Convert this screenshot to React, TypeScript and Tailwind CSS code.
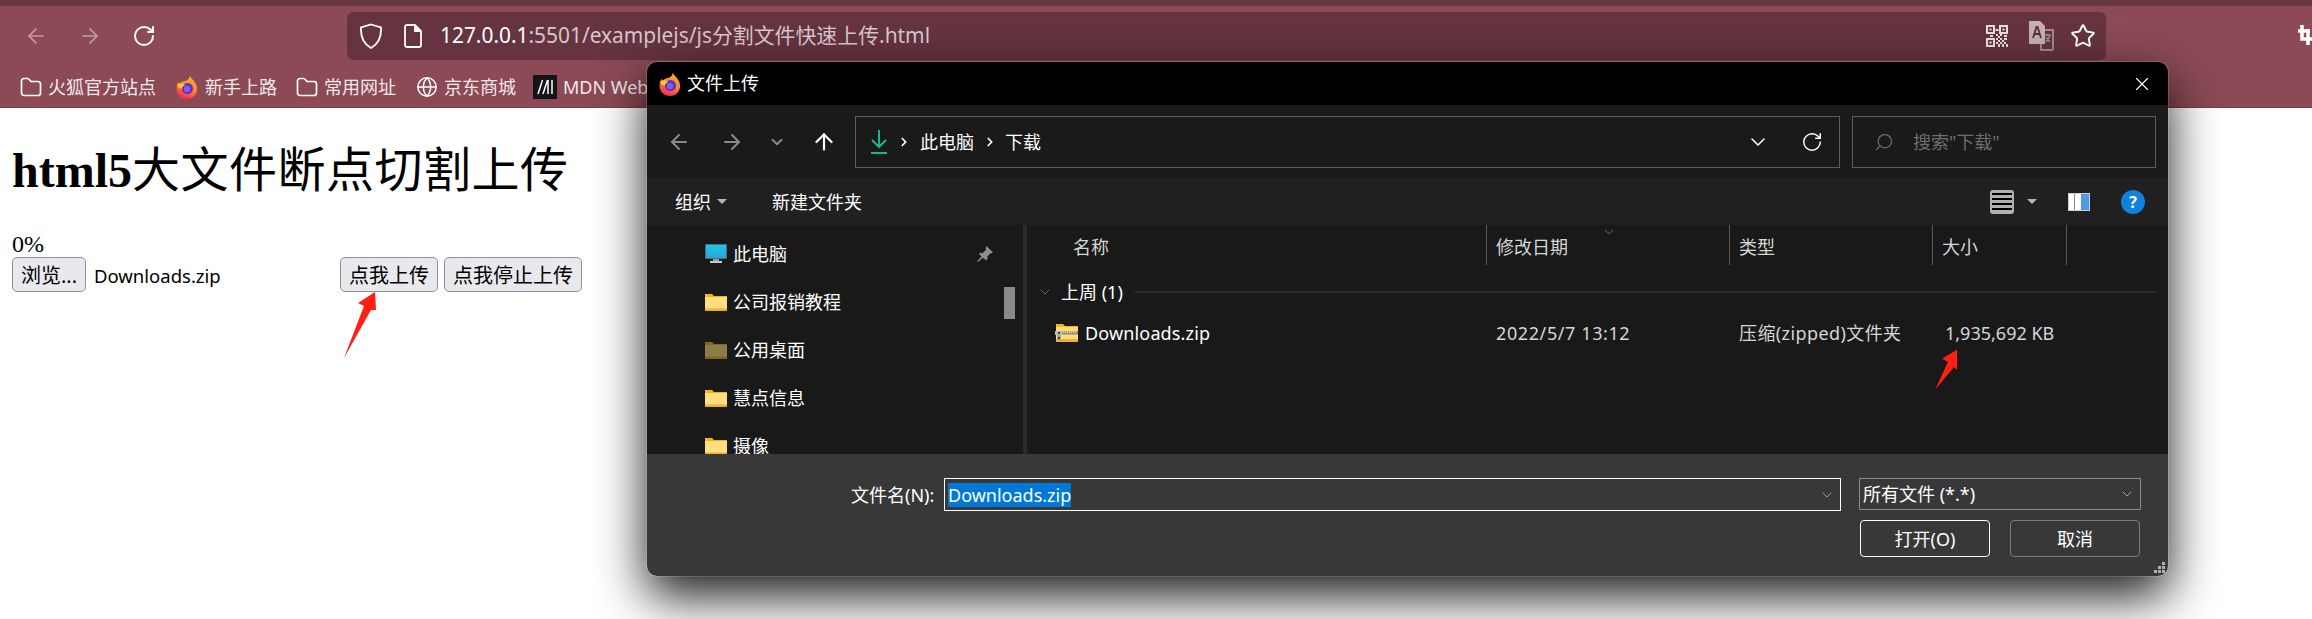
import React from 'react';
import { ArrowLeft, ArrowRight, RotateCw, Star, Globe, ChevronDown, ChevronRight, ArrowUp, Search, X } from 'lucide-react';

const Fox = ({ size = 24 }: { size?: number }) => (
  <svg width={size} height={size} viewBox="0 0 24 24" className="shrink-0">
    <defs>
      <linearGradient id="foxBody" x1="0.7" y1="0" x2="0.3" y2="1">
        <stop offset="0" stopColor="#ffb52e" />
        <stop offset="0.55" stopColor="#ff7a2b" />
        <stop offset="1" stopColor="#f5245f" />
      </linearGradient>
    </defs>
    <path d="M15 .5c.6 3 3.2 4 5 7 2 3.2 2.4 6 2 8-1 5-5 8.500-10 8.500C6 24 1.500 19.500 1.500 13.500c0-2.500.8-5 2.200-6.800l1 2.300C6 7 8 6.200 10 6c2-.3 4.500-2 5-5.500z" fill="url(#foxBody)" />
    <circle cx="12.500" cy="13.500" r="5.500" fill="#5d2fc4" />
    <circle cx="12" cy="14" r="3.200" fill="#8a5ce6" />
    <path d="M2 10c2-2 6-2.500 8 0-1.500 1-3 1.500-3 3.500-2 .5-4-1-5-3.500z" fill="#ffca3d" />
  </svg>
);

const BookmarkFolder = () => (
  <svg width="22" height="22" viewBox="0 0 22 22" fill="none" stroke="#fff" strokeWidth="1.700" className="shrink-0">
    <path d="M1.500 5a2.500 2.500 0 0 1 2.500-2.500h3.500c1 0 1.500.5 2 1.200L11 5.500h7a2.500 2.500 0 0 1 2.500 2.500v9a2.500 2.500 0 0 1-2.500 2.500H4A2.500 2.500 0 0 1 1.500 17z" />
  </svg>
);

const YellowFolder = ({ dim = false }: { dim?: boolean }) => (
  <svg width="22" height="18" viewBox="0 0 22 18" className={`shrink-0 ${dim ? 'opacity-50' : ''}`}>
    <path d="M0 1h7l2 2h13v3H0z" fill="#f5b31f" />
    <path d="M0 4h22v12H0z" fill="#ffdf80" />
    <path d="M0 15.500h22V18H0z" fill="#eeb02e" />
  </svg>
);

const ZipFolder = () => (
  <svg width="23" height="18" viewBox="0 0 23 18" className="shrink-0">
    <path d="M1 0h7l2 2h13v3H1z" fill="#f5b31f" />
    <path d="M1 3h22v13H1z" fill="#ffdc78" />
    <path d="M1 15h22v3H1z" fill="#eeb02e" />
    <path d="M7 7.500h16v3H7z" fill="#8f8a7a" />
    <path d="M8 8.500h14" stroke="#e6e3d6" strokeDasharray="1 1" />
    <path d="M0 7h7v4H0z" fill="#bcbcbc" />
    <path d="M2 11h4v6H2z" fill="#a8a8a8" />
    <path d="M3 8h2v2H3zM3 13h2v2H3z" fill="#3a3a3a" />
  </svg>
);

const Monitor = () => (
  <svg width="22" height="20" viewBox="0 0 22 20" className="shrink-0">
    <defs>
      <linearGradient id="screen" x1="0" y1="0" x2="0" y2="1">
        <stop offset="0" stopColor="#1fc4e8" />
        <stop offset="1" stopColor="#2fa4d6" />
      </linearGradient>
    </defs>
    <rect x="0" y="0" width="22" height="15" rx="1" fill="#3e6f88" />
    <rect x="1" y="1" width="20" height="13" fill="url(#screen)" />
    <path d="M8 15h6v2H8z" fill="#9a9a9a" />
    <path d="M5 17h12v2H5z" fill="#c9c9c9" />
  </svg>
);

const Mdn = () => (
  <svg width="24" height="24" viewBox="0 0 24 24" className="shrink-0">
    <rect width="24" height="24" fill="#15141a" />
    <path d="M5 19 9.500 5M10 19 14.500 5M15 19V5M19 19V5" stroke="#fff" strokeWidth="1.500" fill="none" />
  </svg>
);

const Shield = () => (
  <svg width="24" height="26" viewBox="0 0 24 26" fill="none" stroke="#fff" strokeWidth="1.800" className="shrink-0">
    <path d="M12 1.500 22 4.500c.5 9-1.500 16-10 20.500C3.500 20.500 1.500 13.500 2 4.500z" />
  </svg>
);

const PageIcon = () => (
  <svg width="18" height="24" viewBox="0 0 18 24" fill="none" stroke="#fff" strokeWidth="1.800" className="shrink-0">
    <path d="M3 1h8l6 6v14a2 2 0 0 1-2 2H3a2 2 0 0 1-2-2V3a2 2 0 0 1 2-2z" />
    <path d="M11 1v6h6" fill="#fff" />
  </svg>
);

const QrIcon = () => (
  <svg width="22" height="22" viewBox="0 0 22 22" className="shrink-0" fill="#e8dfe1">
    <path fillRule="evenodd" d="M0 0h9v9H0zM2 2v5h5V2zM13 0h9v9h-9zM15 2v5h5V2zM0 13h9v9H0zM2 15v5h5v-5z" />
    <path d="M3.500 3.500h2v2h-2zM16.500 3.500h2v2h-2zM3.500 16.500h2v2h-2zM9.500 4h3v2h-3zM10 9h2v2h-2zM12 11h2v2h-2zM14 9h2v2h-2zM18 10h3v2h-3zM10 13h2v2h-2zM14 13h2v2h-2zM12 15h2v2h-2zM16 15h2v2h-2zM18 13h3v2h-3zM14 17h2v2h-2zM10 17h2v2h-2zM18 17h2v2h-2zM12 19h2v3h-2zM16 19h2v3h-2zM20 19h2v3h-2zM4 10h3v2H4z" />
  </svg>
);

const TranslateIcon = () => (
  <svg width="26" height="30" viewBox="0 0 26 30" className="shrink-0">
    <path d="M13 9h12v19a1 1 0 0 1-1 1H13z" fill="none" stroke="#b9a3a8" strokeWidth="1.500" />
    <path d="M17 14h6M20 13v2M18 21l4-6M18 16l4 5" stroke="#b9a3a8" strokeWidth="1.200" fill="none" />
    <path d="M1 0h11l5 5v18H5l2 4-2-4H1z" fill="#c4b0b5" />
    <path d="M5 17 8.500 6h1L13 17M6.500 13h5" stroke="#5c2f3a" strokeWidth="1.800" fill="none" />
  </svg>
);

const CropIcon = () => (
  <svg width="14" height="24" viewBox="0 0 14 24" className="shrink-0" fill="none" stroke="#fff" strokeWidth="3.500">
    <path d="M0 7h12M4 1v14h10M10 5v16" />
  </svg>
);

const Bookmark = ({ icon, label, className = '' }: { icon: React.ReactNode; label: string; className?: string }) => (
  <div className={`flex items-center shrink-0 ${className}`}>
    {icon}
    <span className="ml-[6px] text-[18px] leading-none whitespace-nowrap text-[#f3e9eb]">{label}</span>
  </div>
);

const BrowserChrome = () => (
  <div className="h-[108px] shrink-0 bg-[#8b4a55] border-b border-[#7a3f4a]">
    <div className="h-[6px] bg-[#6a3843]" />
    <div className="h-[60px] flex items-center">
      <div className="w-[347px] flex items-center pl-[24px]">
        <ArrowLeft size={24} strokeWidth={1.700} className="text-[#c49da5]" />
        <ArrowRight size={24} strokeWidth={1.700} className="ml-[30px] text-[#c49da5]" />
        <RotateCw size={24} strokeWidth={2} className="ml-[30px] text-white" />
      </div>
      <div className="h-[48px] w-[1759px] rounded-[6px] bg-[#653440] flex items-center pl-[12px] pr-[10px]">
        <Shield />
        <div className="ml-[21px]"><PageIcon /></div>
        <span className="ml-[18px] text-[20.900px] whitespace-nowrap text-[#d9c6ca]">
          <span className="text-white">127.0.0.1</span>:5501/examplejs/js分割文件快速上传.html
        </span>
        <div className="ml-auto flex items-center">
          <QrIcon />
          <div className="ml-[20px]"><TranslateIcon /></div>
          <Star size={26} strokeWidth={1.800} className="ml-[16px] text-white" />
        </div>
      </div>
      <div className="ml-auto"><CropIcon /></div>
    </div>
    <div className="h-[41px] flex items-center pl-[20px] overflow-hidden">
      <Bookmark icon={<BookmarkFolder />} label="火狐官方站点" />
      <Bookmark className="ml-[19px]" icon={<Fox />} label="新手上路" />
      <Bookmark className="ml-[19px]" icon={<BookmarkFolder />} label="常用网址" />
      <Bookmark className="ml-[20px]" icon={<Globe size={22} strokeWidth={1.600} className="text-white" />} label="京东商城" />
      <Bookmark className="ml-[17px]" icon={<Mdn />} label="MDN Web Docs" />
    </div>
  </div>
);

const PageButton = ({ label, className = '' }: { label: string; className?: string }) => (
  <button className={`h-[35px] rounded-[5px] border border-[#8f8f9d] bg-[#e9e9ed] pt-[3px] text-[20px] leading-none text-black whitespace-nowrap ${className}`}>
    {label}
  </button>
);

const UploadPage = () => (
  <div className="flex-1 bg-white pl-[12px] text-black">
    <h1 className="pt-[35px] h-[124px] text-[48px] leading-[56px] whitespace-nowrap font-['Liberation_Serif','Noto_Sans_CJK_SC',serif]">
      <span className="font-bold">html5</span>
      <span className="font-normal tracking-[0.5px]">大文件断点切割上传</span>
    </h1>
    <div className="h-[25px] text-[24px] leading-[25px] font-normal font-['Liberation_Serif',serif]">0%</div>
    <div className="flex items-center">
      <PageButton label="浏览..." className="w-[74px]" />
      <span className="ml-[8px] w-[246px] pt-[3px] text-[18.500px] leading-none">Downloads.zip</span>
      <PageButton label="点我上传" className="w-[98px]" />
      <PageButton label="点我停止上传" className="ml-[6px] w-[138px]" />
    </div>
  </div>
);

const NavArrow = ({ children, className = '' }: { children: React.ReactNode; className?: string }) => (
  <div className={`flex items-center justify-center shrink-0 ${className}`}>{children}</div>
);

const NavBar = () => (
  <div className="h-[73px] flex items-center bg-[#1a1a1a] pl-[19px]">
    <NavArrow className="w-[26px]"><ArrowLeft size={24} strokeWidth={2} className="text-[#8a8a8a]" /></NavArrow>
    <NavArrow className="ml-[27px] w-[26px]"><ArrowRight size={24} strokeWidth={2} className="text-[#8a8a8a]" /></NavArrow>
    <NavArrow className="ml-[22px] w-[20px]"><ChevronDown size={18} strokeWidth={2.500} className="text-[#8a8a8a]" /></NavArrow>
    <NavArrow className="ml-[24px] w-[26px]"><ArrowUp size={26} strokeWidth={2} className="text-white" /></NavArrow>
    <div className="ml-[18px] w-[985px] h-[52px] border border-[#5c5c5c] flex items-center pl-[12px] pr-[16px] text-[18px] text-white">
      <svg width="22" height="26" viewBox="0 0 22 26" fill="none" stroke="#1fb391" strokeWidth="2" className="shrink-0">
        <path d="M11 1v17M4 11l7 7 7-7M3 24h16" />
      </svg>
      <NavArrow className="ml-[6px] w-[16px]"><ChevronRight size={14} strokeWidth={3} /></NavArrow>
      <span className="ml-[8px] leading-none">此电脑</span>
      <NavArrow className="ml-[8px] w-[16px]"><ChevronRight size={14} strokeWidth={3} /></NavArrow>
      <span className="ml-[7px] leading-none">下载</span>
      <ChevronDown size={24} strokeWidth={1.500} className="ml-auto text-white" />
      <RotateCw size={22} strokeWidth={1.600} className="ml-[31px] text-white" />
    </div>
    <div className="ml-[12px] w-[304px] h-[52px] border border-[#5c5c5c] flex items-center pl-[21px] text-[18px] text-[#6e6e6e]">
      <Search size={20} strokeWidth={1.500} className="-scale-x-100 text-[#6e6e6e]" />
      <span className="ml-[19px] leading-none">搜索"下载"</span>
    </div>
  </div>
);

const ToolBar = () => (
  <div className="h-[47px] flex items-center bg-[#202020] pl-[28px] pr-[23px] text-[18px] text-white">
    <span className="leading-none">组织</span>
    <div className="ml-[6px] w-0 h-0 border-x-[5px] border-x-transparent border-t-[5px] border-t-[#b5b5b5]" />
    <span className="ml-[45px] leading-none">新建文件夹</span>
    <div className="ml-auto flex items-center">
      <div className="w-[24px] h-[24px] rounded-[3px] bg-[#b0b0b0] flex flex-col justify-center gap-[3px] px-[2px]">
        <div className="h-[2px] bg-black" />
        <div className="h-[2px] bg-black" />
        <div className="h-[2px] bg-black" />
        <div className="h-[2px] bg-black" />
      </div>
      <div className="ml-[13px] w-0 h-0 border-x-[5px] border-x-transparent border-t-[5px] border-t-[#b5b5b5]" />
      <div className="ml-[31px] w-[22px] h-[18px] flex border border-[#d0d0d0] bg-white">
        <div className="w-[6px] bg-white border-r border-[#888]" />
        <div className="w-[6px] bg-white" />
        <div className="flex-1 bg-[#4a9ae6]" />
      </div>
      <div className="ml-[31px] w-[24px] h-[24px] rounded-full bg-[#0f82de] text-white text-[16px] leading-[24px] font-bold text-center">?</div>
    </div>
  </div>
);

const sidebarItems = [
  { label: '公司报销教程' },
  { label: '公用桌面', dim: true },
  { label: '慧点信息' },
  { label: '摄像' },
];

const Sidebar = () => (
  <div className="relative w-[376px] shrink-0 overflow-hidden pt-[5px] pl-[58px] text-[18px] text-white">
    <div className="h-[48px] flex items-center">
      <Monitor />
      <span className="ml-[6px] leading-none">此电脑</span>
      <svg width="16" height="16" viewBox="0 0 16 16" fill="#8f8f8f" className="ml-[190px]">
        <path d="M9.500 0 16 6.500l-1.500 1-1-.3-3.200 3.200.2 2.600-1.200 1.200L5.800 11.700 1 16l-.8-.8 4.300-4.800-2.500-2.500 1.200-1.200 2.600.2L9 3.700l-.4-1.100z" />
      </svg>
    </div>
    {sidebarItems.map(item => (
      <div key={item.label} className="h-[48px] flex items-center">
        <YellowFolder dim={item.dim} />
        <span className="ml-[6px] leading-none whitespace-nowrap">{item.label}</span>
      </div>
    ))}
    <div className="absolute left-[357px] top-[62px] w-[11px] h-[32px] bg-[#8a8a8a]" />
  </div>
);

const FileList = () => (
  <div className="flex-1 min-w-0 text-[18px]">
    <div className="h-[41px] grid grid-cols-[459px_243px_203px_135px] text-[#d6d6d6]">
      <div className="pl-[46px] pt-[13px] leading-none">名称</div>
      <div className="relative border-l border-[#5a5a5a] pl-[9px] pt-[13px] leading-none mb-[1px]">
        修改日期
        <ChevronDown size={14} strokeWidth={1} className="absolute left-[115px] top-0 text-[#aaa]" />
      </div>
      <div className="border-l border-[#5a5a5a] pl-[9px] pt-[13px] leading-none mb-[1px]">类型</div>
      <div className="border-l border-r border-[#5a5a5a] pl-[9px] pt-[13px] leading-none mb-[1px]">大小</div>
    </div>
    <div className="mt-[14px] h-[24px] flex items-center pl-[10px] pr-[11px]">
      <ChevronDown size={16} strokeWidth={1.200} className="text-[#777]" />
      <span className="ml-[8px] leading-none text-white">上周 (1)</span>
      <div className="ml-[12px] flex-1 h-[2px] bg-[#2b2b2b]" />
    </div>
    <div className="mt-[17px] h-[24px] grid grid-cols-[459px_243px_203px_135px] items-center text-[#d6d6d6]">
      <div className="flex items-center pl-[28px]">
        <ZipFolder />
        <span className="ml-[7px] leading-none tracking-[0.15px] text-white">Downloads.zip</span>
      </div>
      <div className="pl-[10px] leading-none tracking-[0.6px]">2022/5/7 13:12</div>
      <div className="pl-[10px] leading-none tracking-[0.4px] whitespace-nowrap">压缩(zipped)文件夹</div>
      <div className="pl-[13px] leading-none whitespace-nowrap">1,935,692 KB</div>
    </div>
  </div>
);

const Footer = () => (
  <div className="relative h-[122px] bg-[#383838] pt-[24px] text-[18px] text-white">
    <div className="flex items-start pl-[204px]">
      <span className="w-[93px] h-[33px] leading-[34px] whitespace-nowrap">文件名(N):</span>
      <div className="w-[897px] h-[33px] border border-white flex items-center pl-[3px] pr-[5px]">
        <span className="h-[24px] leading-[24px] bg-[#0078d7] whitespace-nowrap">Downloads.zip</span>
        <ChevronDown size={16} strokeWidth={1.200} className="ml-auto text-[#b5b5b5]" />
      </div>
      <div className="ml-[18px] w-[282px] h-[32px] border border-[#8a8a8a] flex items-center pl-[3px] pr-[5px]">
        <span className="leading-none whitespace-nowrap">所有文件 (*.*)</span>
        <ChevronDown size={16} strokeWidth={1.200} className="ml-auto text-[#b5b5b5]" />
      </div>
    </div>
    <div className="mt-[9px] flex justify-end gap-[20px] pr-[28px]">
      <button className="w-[130px] h-[37px] rounded-[4px] border border-white leading-none">打开(O)</button>
      <button className="w-[130px] h-[37px] rounded-[4px] border border-[#7c7c7c] leading-none">取消</button>
    </div>
    <svg width="12" height="12" viewBox="0 0 12 12" fill="#b0b0b0" className="absolute right-[2px] bottom-[2px]">
      <path d="M8 0h3v3H8zM4 4h3v3H4zM8 4h3v3H8zM0 8h3v3H0zM4 8h3v3H4zM8 8h3v3H8z" />
    </svg>
  </div>
);

const FileDialog = () => (
  <div className="absolute left-[647px] top-[62px] w-[1521px] h-[514px] flex flex-col overflow-hidden rounded-[10px] shadow-[0_0_0_1px_rgba(255,255,255,0.15),0_20px_50px_rgba(0,0,0,0.9)]">
    <div className="h-[43px] shrink-0 flex items-center bg-black pl-[11px] pr-[15px] text-[18px] text-white">
      <Fox />
      <span className="ml-[5px] mt-[-2px] leading-none">文件上传</span>
      <X size={22} strokeWidth={1.200} className="ml-auto" />
    </div>
    <NavBar />
    <ToolBar />
    <div className="h-[229px] flex bg-[#191919]">
      <Sidebar />
      <div className="w-[4px] shrink-0 bg-[#2b2b2b]" />
      <FileList />
    </div>
    <Footer />
  </div>
);

const RedArrow = ({ className, points }: { className: string; points: string }) => (
  <svg viewBox="0 0 40 70" className={`absolute ${className}`} fill="#ff1f14">
    <polygon points={points} />
  </svg>
);

export default function App() {
  return (
    <div className="relative flex h-[619px] w-[2312px] flex-col overflow-hidden bg-white font-['Noto_Sans','Noto_Sans_CJK_SC',sans-serif]">
      <BrowserChrome />
      <UploadPage />
      <FileDialog />
      <RedArrow className="left-[340px] top-[290px] w-[40px] h-[70px]" points="35,2 18,13 24,16 4,68 31,20 36,20" />
      <RedArrow className="left-[1930px] top-[349px] w-[30px] h-[52.500px]" points="36,1 16,13 24,17 7,54 32,24 36,28" />
    </div>
  );
}
